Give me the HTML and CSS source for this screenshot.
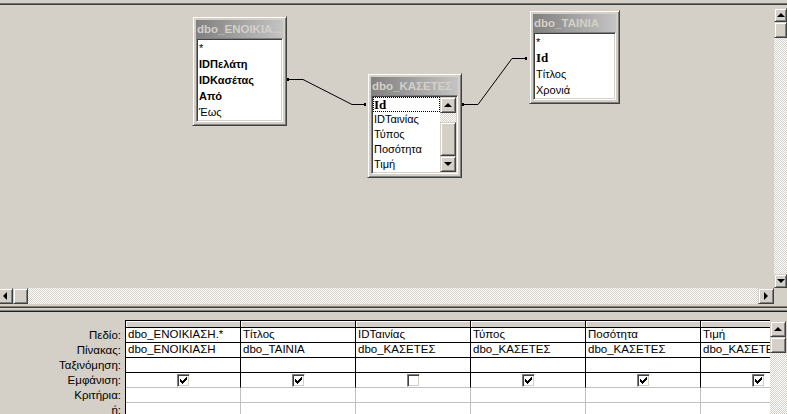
FILE: index.html
```html
<!DOCTYPE html>
<html>
<head>
<meta charset="utf-8">
<title>Query Design</title>
<link rel="stylesheet" href="styles.css">
</head>
<body>
<div class="app">
  <div class="topline"></div>
  <div class="design">
    <div class="canvas">
      <svg class="links" width="774" height="283" viewBox="0 0 774 283">
        <polyline points="288,74.5 303,74.5 352,99.5 365,99.5" fill="none" stroke="#000" stroke-width="1"/>
        <rect x="287" y="73" width="2" height="3" fill="#000"/>
        <rect x="364" y="98" width="2" height="3" fill="#000"/>
        <polyline points="463,99.5 478,99.5 512,53.5 526,53.5" fill="none" stroke="#000" stroke-width="1"/>
        <rect x="462" y="98" width="2" height="3" fill="#000"/>
        <rect x="525" y="52" width="2" height="3" fill="#000"/>
      </svg>

      <div class="tbl t1">
        <div class="tbl-title">dbo_ΕΝΟΙΚΙΑ...</div>
        <div class="tbl-list">
          <div class="items rows16">
            <div class="item">*</div>
            <div class="item key">IDΠελάτη</div>
            <div class="item key">IDΚασέτας</div>
            <div class="item key">Από</div>
            <div class="item">Έως</div>
          </div>
        </div>
      </div>

      <div class="tbl t2">
        <div class="tbl-title">dbo_ΚΑΣΕΤΕΣ</div>
        <div class="tbl-list">
          <div class="items rows15">
            <div class="item pk focus">Id</div>
            <div class="item">IDΤαινίας</div>
            <div class="item">Τύπος</div>
            <div class="item">Ποσότητα</div>
            <div class="item">Τιμή</div>
          </div>
          <div class="lscroll">
            <div class="btn lbtn"><span class="arr-up"></span></div>
            <div class="track ltrack"></div>
            <div class="btn lthumb"></div>
            <div class="btn lbtn"><span class="arr-down"></span></div>
          </div>
        </div>
      </div>

      <div class="tbl t3">
        <div class="tbl-title">dbo_ΤΑΙΝΙΑ</div>
        <div class="tbl-list">
          <div class="items rows16">
            <div class="item">*</div>
            <div class="item pk">Id</div>
            <div class="item">Τίτλος</div>
            <div class="item">Χρονιά</div>
          </div>
        </div>
      </div>
    </div>

    <div class="vscroll">
      <div class="btn vbtn"><span class="arr-up"></span></div>
      <div class="btn vthumb"></div>
      <div class="track"></div>
      <div class="btn vbtn"><span class="arr-down"></span></div>
    </div>

    <div class="hscroll">
      <div class="btn hbtn hleft"><span class="arr-left"></span></div>
      <div class="btn hthumb"></div>
      <div class="track"></div>
      <div class="btn hbtn"><span class="arr-right"></span></div>
    </div>
    <div class="corner"></div>
  </div>

  <div class="splitter"></div>

  <div class="qbe">
    <div class="labels">
      <div class="label">Πεδίο:</div>
      <div class="label">Πίνακας:</div>
      <div class="label">Ταξινόμηση:</div>
      <div class="label">Εμφάνιση:</div>
      <div class="label">Κριτήρια:</div>
      <div class="label">ή:</div>
    </div>

    <div class="gridwrap">
      <div class="grid">
        <div class="hd"></div><div class="hd"></div><div class="hd"></div><div class="hd"></div><div class="hd"></div><div class="hd"></div>

        <div class="cell">dbo_ΕΝΟΙΚΙΑΣΗ.*</div>
        <div class="cell">Τίτλος</div>
        <div class="cell">IDΤαινίας</div>
        <div class="cell">Τύπος</div>
        <div class="cell">Ποσότητα</div>
        <div class="cell">Τιμή</div>

        <div class="cell">dbo_ΕΝΟΙΚΙΑΣΗ</div>
        <div class="cell">dbo_ΤΑΙΝΙΑ</div>
        <div class="cell">dbo_ΚΑΣΕΤΕΣ</div>
        <div class="cell">dbo_ΚΑΣΕΤΕΣ</div>
        <div class="cell">dbo_ΚΑΣΕΤΕΣ</div>
        <div class="cell">dbo_ΚΑΣΕΤΕΣ</div>

        <div class="cell"></div><div class="cell"></div><div class="cell"></div><div class="cell"></div><div class="cell"></div><div class="cell"></div>

        <div class="cell show"><span class="cb"><svg width="7" height="7" viewBox="0 0 7 7" shape-rendering="crispEdges"><rect x="6" y="0" width="1" height="1"/><rect x="5" y="1" width="2" height="1"/><rect x="0" y="2" width="1" height="1"/><rect x="4" y="2" width="3" height="1"/><rect x="0" y="3" width="2" height="1"/><rect x="3" y="3" width="3" height="1"/><rect x="0" y="4" width="5" height="1"/><rect x="1" y="5" width="3" height="1"/><rect x="2" y="6" width="1" height="1"/></svg></span></div>
        <div class="cell show"><span class="cb"><svg width="7" height="7" viewBox="0 0 7 7" shape-rendering="crispEdges"><rect x="6" y="0" width="1" height="1"/><rect x="5" y="1" width="2" height="1"/><rect x="0" y="2" width="1" height="1"/><rect x="4" y="2" width="3" height="1"/><rect x="0" y="3" width="2" height="1"/><rect x="3" y="3" width="3" height="1"/><rect x="0" y="4" width="5" height="1"/><rect x="1" y="5" width="3" height="1"/><rect x="2" y="6" width="1" height="1"/></svg></span></div>
        <div class="cell show"><span class="cb"></span></div>
        <div class="cell show"><span class="cb"><svg width="7" height="7" viewBox="0 0 7 7" shape-rendering="crispEdges"><rect x="6" y="0" width="1" height="1"/><rect x="5" y="1" width="2" height="1"/><rect x="0" y="2" width="1" height="1"/><rect x="4" y="2" width="3" height="1"/><rect x="0" y="3" width="2" height="1"/><rect x="3" y="3" width="3" height="1"/><rect x="0" y="4" width="5" height="1"/><rect x="1" y="5" width="3" height="1"/><rect x="2" y="6" width="1" height="1"/></svg></span></div>
        <div class="cell show"><span class="cb"><svg width="7" height="7" viewBox="0 0 7 7" shape-rendering="crispEdges"><rect x="6" y="0" width="1" height="1"/><rect x="5" y="1" width="2" height="1"/><rect x="0" y="2" width="1" height="1"/><rect x="4" y="2" width="3" height="1"/><rect x="0" y="3" width="2" height="1"/><rect x="3" y="3" width="3" height="1"/><rect x="0" y="4" width="5" height="1"/><rect x="1" y="5" width="3" height="1"/><rect x="2" y="6" width="1" height="1"/></svg></span></div>
        <div class="cell show"><span class="cb"><svg width="7" height="7" viewBox="0 0 7 7" shape-rendering="crispEdges"><rect x="6" y="0" width="1" height="1"/><rect x="5" y="1" width="2" height="1"/><rect x="0" y="2" width="1" height="1"/><rect x="4" y="2" width="3" height="1"/><rect x="0" y="3" width="2" height="1"/><rect x="3" y="3" width="3" height="1"/><rect x="0" y="4" width="5" height="1"/><rect x="1" y="5" width="3" height="1"/><rect x="2" y="6" width="1" height="1"/></svg></span></div>

        <div class="cell lite"></div><div class="cell lite"></div><div class="cell lite"></div><div class="cell lite"></div><div class="cell lite"></div><div class="cell lite"></div>
        <div class="cell lite"></div><div class="cell lite"></div><div class="cell lite"></div><div class="cell lite"></div><div class="cell lite"></div><div class="cell lite"></div>
      </div>
    </div>

    <div class="gscroll">
      <div class="btn gbtn"><span class="arr-up"></span></div>
      <div class="btn gthumb"></div>
      <div class="track"></div>
    </div>
  </div>
</div>
</body>
</html>
```

FILE: styles.css
```css
* { box-sizing: border-box; }
html, body { margin: 0; padding: 0; }
body {
  width: 787px;
  height: 414px;
  overflow: hidden;
  background: #d4d0c8;
  font-family: "Liberation Sans", "DejaVu Sans", sans-serif;
  font-size: 11px;
  color: #000;
}
.app { display: flex; flex-direction: column; height: 414px; }

.topline {
  height: 5px;
  border-top: 3px solid #d4d0c8;
  background: linear-gradient(#707070 0 1px, #404040 1px 2px);
}

/* ---------- design pane ---------- */
.design {
  display: grid;
  grid-template-columns: 774px 13px;
  grid-template-rows: 283px 16px;
}
.canvas { position: relative; overflow: hidden; background: #d4d0c8; }
.links { position: absolute; left: 0; top: 0; }

.btn {
  background: #d4d0c8;
  border: 1px solid;
  border-color: #d4d0c8 #404040 #404040 #d4d0c8;
  box-shadow: inset 1px 1px #fff, inset -1px -1px #808080;
  display: flex;
  align-items: center;
  justify-content: center;
  flex: none;
}
.track {
  flex: 1;
  background: repeating-conic-gradient(#fff 0 25%, #d4d0c8 0 50%) 0 0 / 2px 2px;
}
.arr-up, .arr-down, .arr-left, .arr-right { width: 0; height: 0; display: block; }
.arr-up { border-left: 4px solid transparent; border-right: 4px solid transparent; border-bottom: 4px solid #000; }
.arr-down { border-left: 4px solid transparent; border-right: 4px solid transparent; border-top: 4px solid #000; }
.arr-left { border-top: 4px solid transparent; border-bottom: 4px solid transparent; border-right: 4px solid #000; }
.arr-right { border-top: 4px solid transparent; border-bottom: 4px solid transparent; border-left: 4px solid #000; }

.vscroll { display: flex; flex-direction: column; padding-top: 3px; }
.vbtn { height: 14px; }
.vthumb { height: 16px; }

.hscroll { display: flex; }
.hbtn { width: 16px; }
.hleft { margin-left: -3px; }
.hthumb { width: 15px; }
.corner { background: #d4d0c8; }

/* ---------- table windows ---------- */
.tbl {
  position: absolute;
  background: #d4d0c8;
  border: 1px solid;
  border-color: #d4d0c8 #404040 #404040 #d4d0c8;
  box-shadow: inset 1px 1px #fff, inset -1px -1px #808080;
  padding: 3px;
}
.t1 { left: 192px; top: 11px; width: 95px; }
.t2 { left: 367px; top: 68px; width: 95px; }
.t3 { left: 529px; top: 5px; width: 91px; }

.tbl-title {
  height: 18px;
  line-height: 18px;
  padding-left: 1px;
  background: linear-gradient(to right, #808080, #c4c4c4);
  color: #d4d0c8;
  font-weight: bold;
  font-size: 11.5px;
  white-space: nowrap;
  overflow: hidden;
}
.tbl-list {
  display: flex;
  background: #fff;
  border: 1px solid;
  border-color: #808080 #fff #fff #808080;
  box-shadow: inset 1px 1px #404040, inset -1px -1px #d4d0c8;
  padding: 1px;
}
.items { flex: 1; min-width: 0; }
.item {
  padding-left: 1px;
  white-space: nowrap;
  overflow: hidden;
}
.rows16 .item { height: 16px; line-height: 16px; }
.rows15 .item { height: 15px; line-height: 15px; }
.key { font-weight: bold; }
.pk { font-family: "Liberation Serif", "DejaVu Serif", serif; font-weight: bold; font-size: 13px; }
.focus { outline: 1px dotted #000; outline-offset: -1px; }

.lscroll { width: 16px; display: flex; flex-direction: column; }
.lbtn { height: 16px; }
.ltrack { flex: none; height: 9px; }
.lthumb { height: 34px; }

/* ---------- splitter ---------- */
.splitter {
  height: 8px;
  background: linear-gradient(#d4d0c8 0 2px, #808080 2px 3px, #404040 3px 4px, #d4d0c8 4px 6px, #808080 6px 7px, #202020 7px 8px);
}

/* ---------- QBE grid ---------- */
.qbe { display: flex; padding-top: 8px; flex: 1; min-height: 0; font-size: 11.5px; }
.labels { width: 125px; flex: none; padding-top: 8px; padding-right: 4px; text-align: right; }
.label { height: 15px; line-height: 14px; white-space: nowrap; }

.gridwrap {
  width: 645px;
  flex: none;
  overflow: hidden;
  border-top: 1px solid #000;
  border-left: 1px solid #000;
}
.grid {
  display: grid;
  grid-template-columns: repeat(6, 115px);
  width: 690px;
  grid-auto-rows: 15px;
  grid-template-rows: 7px;
}
.hd {
  background: #d4d0c8;
  border-right: 1px solid #000;
  border-bottom: 1px solid #000;
  box-shadow: inset 1px 1px #fff;
}
.cell {
  background: #fff;
  border-right: 1px solid #000;
  border-bottom: 1px solid #000;
  padding-left: 2px;
  line-height: 13px;
  white-space: nowrap;
  overflow: hidden;
}
.show { display: flex; align-items: center; justify-content: center; padding-left: 0; border-bottom-color: #c0c0c0; }
.lite { border-right-color: #c0c0c0; border-bottom-color: #c0c0c0; }

.cb {
  width: 13px;
  height: 13px;
  background: #fff;
  border: 1px solid;
  border-color: #808080 #fff #fff #808080;
  box-shadow: inset 1px 1px #404040, inset -1px -1px #d4d0c8;
  display: flex;
  align-items: center;
  justify-content: center;
}
.cb svg { display: block; fill: #000; }

.gscroll { width: 17px; flex: none; display: flex; flex-direction: column; padding-top: 1px; }
.gbtn { height: 16px; width: 16px; }
.gthumb { height: 16px; width: 16px; }
.gscroll .track { flex: 1; }
```
